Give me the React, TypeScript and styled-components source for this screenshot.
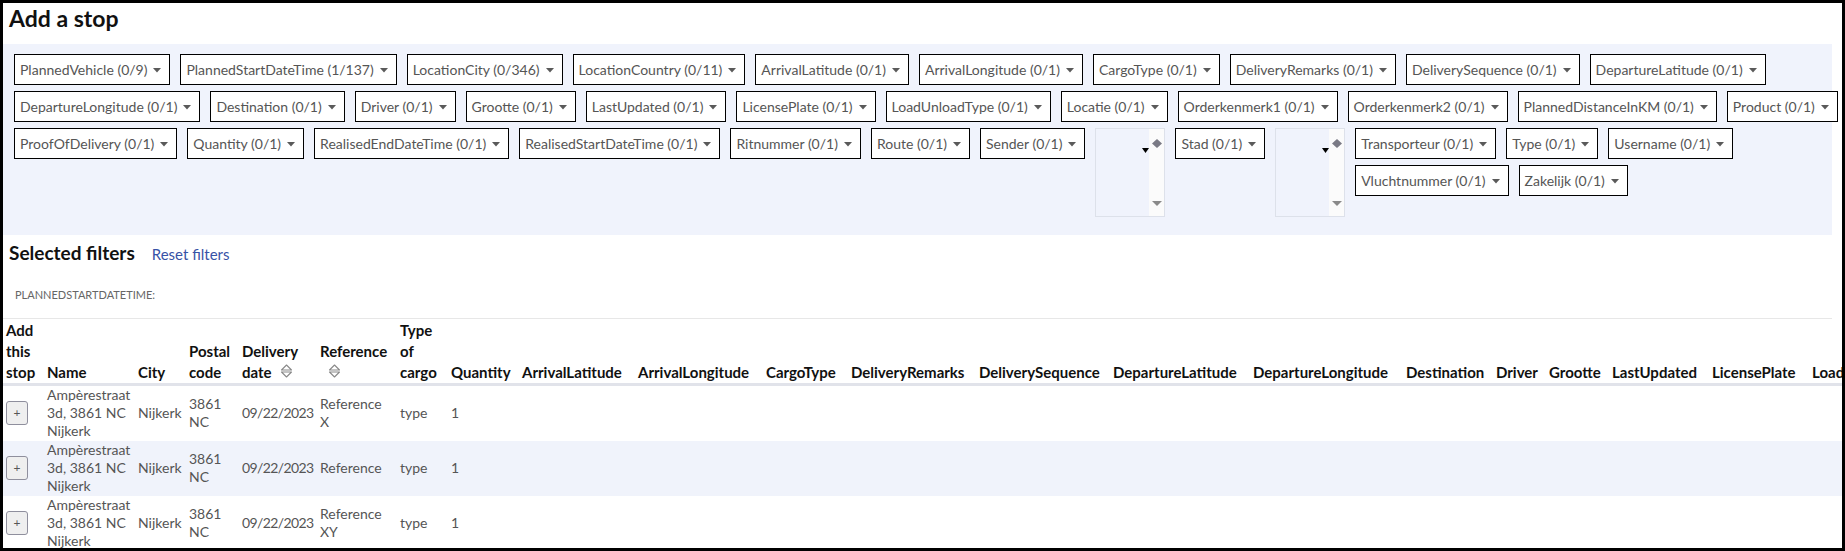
import React from "react";
import styled, { createGlobalStyle } from "styled-components";

const GlobalStyle = createGlobalStyle`
  html, body { margin: 0; padding: 0; background: #fff; }
  body { font-family: Lato, "Liberation Sans", sans-serif; }
  * { box-sizing: border-box; }
`;

const Frame = styled.div`
  width: 1845px;
  height: 551px;
  border: 3px solid #000;
  overflow: hidden;
  background: #fff;
`;

const Content = styled.div`
  padding-right: 10px;
`;

const Title = styled.h1`
  margin: 0;
  padding: 1px 6px 12px;
  font-size: 23px;
  line-height: 28px;
  font-weight: 700;
  color: #111;
`;

const FilterPanel = styled.div`
  background: #f0f3fc;
  padding: 10px 11px 18px;
  display: flex;
  flex-direction: column;
  gap: 6px;
`;

const ChipRow = styled.div`
  display: flex;
  gap: 10px;
  align-items: flex-start;
`;

const ChipColumn = styled.div`
  display: flex;
  flex-direction: column;
  gap: 6px;
`;

const Chip = styled.button`
  flex: none;
  height: 31px;
  display: inline-flex;
  align-items: center;
  gap: 6px;
  padding: 0 8px 0 5px;
  border: 1px solid #000;
  border-radius: 0;
  background: #fff;
  font-family: Lato, "Liberation Sans", sans-serif;
  font-size: 14px;
  color: #555;
  white-space: nowrap;
  cursor: pointer;
`;

const Caret = styled.svg`
  flex: none;
  display: block;
  margin-top: 1px;
`;

const ListBox = styled.div`
  flex: none;
  width: 70px;
  height: 89px;
  border: 1px solid #dde1ea;
  background: #f0f3fc;
  display: flex;
`;

const ListBody = styled.div`
  flex: 1;
  display: flex;
  justify-content: flex-end;
  align-items: flex-start;
  padding-top: 19px;
`;

const ScrollTrack = styled.div`
  width: 15px;
  background: #fbfbfb;
  display: flex;
  flex-direction: column;
  align-items: center;
  justify-content: space-between;
  padding: 10px 0 10px;
`;

const SelectedSection = styled.section`
  padding: 6px 0 16px;
  border-bottom: 1px solid #e7e7e7;
`;

const SelectedHeader = styled.div`
  display: flex;
  align-items: baseline;
  gap: 17px;
  padding-left: 6px;
`;

const SelectedTitle = styled.h2`
  margin: 0;
  font-size: 19px;
  line-height: 24px;
  font-weight: 700;
  color: #111;
`;

const ResetLink = styled.a`
  font-size: 15px;
  line-height: 24px;
  color: #3752a6;
  text-decoration: none;
  cursor: pointer;
`;

const FilterTag = styled.div`
  margin-top: 22px;
  padding-left: 12px;
  font-size: 11px;
  line-height: 14px;
  color: #666;
  text-transform: uppercase;
`;

const Table = styled.table<{ $w: number }>`
  width: ${(p) => p.$w}px;
  table-layout: fixed;
  border-collapse: separate;
  border-spacing: 0;
`;

const Col = styled.col<{ $w: number }>`
  width: ${(p) => p.$w}px;
`;

const Th = styled.th`
  padding: 1px 5px 0;
  text-align: left;
  vertical-align: bottom;
  font-size: 15px;
  line-height: 21px;
  font-weight: 700;
  color: #111;
  border-bottom: 3px solid #e1e3ea;
  white-space: normal;
  &:first-child { padding-left: 3px; }
`;

const Tr = styled.tr<{ $alt: boolean }>`
  background: ${(p) => (p.$alt ? "#f0f3fb" : "#fff")};
`;

const Td = styled.td<{ $tight?: boolean }>`
  padding: 0 5px 1px;
  vertical-align: middle;
  font-size: 14px;
  line-height: 18px;
  color: #555;
  letter-spacing: ${(p) => (p.$tight ? "-0.6px" : "normal")};
  &:first-child { padding-left: 3px; }
`;

const AddButton = styled.button`
  width: 22px;
  height: 24px;
  padding: 0;
  border: 1px solid #8f8f9d;
  border-radius: 3px;
  background: #efefef;
  color: #555;
  font-family: Lato, "Liberation Sans", sans-serif;
  font-size: 12px;
  line-height: 20px;
  display: block;
  cursor: pointer;
`;

const SortIcon = styled.svg`
  display: inline-block;
  margin-left: 8px;
`;

const CaretIcon = () => (
  <Caret width="8" height="5" viewBox="0 0 8 5">
    <polygon points="0,0 8,0 4,4.5" fill="#5a5a5a" />
  </Caret>
);

const Sort = () => (
  <SortIcon width="13" height="14" viewBox="0 0 13 14">
    <polygon points="1.5,6 6.5,1 11.5,6" fill="none" stroke="#8a8a8a" strokeWidth="1.1" strokeLinejoin="round" />
    <polygon points="1.5,8 11.5,8 6.5,13" fill="none" stroke="#8a8a8a" strokeWidth="1.1" strokeLinejoin="round" />
  </SortIcon>
);

const EmptyList = () => (
  <ListBox>
    <ListBody>
      <svg width="7" height="5" viewBox="0 0 7 5">
        <polygon points="0,0 7,0 3.5,5" fill="#000" />
      </svg>
    </ListBody>
    <ScrollTrack>
      <svg width="10" height="9" viewBox="0 0 10 9">
        <polygon points="5,0 10,4.5 5,9 0,4.5" fill="#7a7a85" />
      </svg>
      <svg width="10" height="5" viewBox="0 0 10 5">
        <polygon points="0,0 10,0 5,5" fill="#8a8a8a" />
      </svg>
    </ScrollTrack>
  </ListBox>
);

const FilterChip = ({ label }: { label: string }) => (
  <Chip type="button">
    {label}
    <CaretIcon />
  </Chip>
);

const row1 = [
  "PlannedVehicle (0/9)",
  "PlannedStartDateTime (1/137)",
  "LocationCity (0/346)",
  "LocationCountry (0/11)",
  "ArrivalLatitude (0/1)",
  "ArrivalLongitude (0/1)",
  "CargoType (0/1)",
  "DeliveryRemarks (0/1)",
  "DeliverySequence (0/1)",
  "DepartureLatitude (0/1)",
];
const row2 = [
  "DepartureLongitude (0/1)",
  "Destination (0/1)",
  "Driver (0/1)",
  "Grootte (0/1)",
  "LastUpdated (0/1)",
  "LicensePlate (0/1)",
  "LoadUnloadType (0/1)",
  "Locatie (0/1)",
  "Orderkenmerk1 (0/1)",
  "Orderkenmerk2 (0/1)",
  "PlannedDistanceInKM (0/1)",
  "Product (0/1)",
];
const row3 = [
  "ProofOfDelivery (0/1)",
  "Quantity (0/1)",
  "RealisedEndDateTime (0/1)",
  "RealisedStartDateTime (0/1)",
  "Ritnummer (0/1)",
  "Route (0/1)",
  "Sender (0/1)",
];
const tailTop = ["Transporteur (0/1)", "Type (0/1)", "Username (0/1)"];
const tailBottom = ["Vluchtnummer (0/1)", "Zakelijk (0/1)"];

type Column = { label: string; w: number; sort?: boolean };
const columns: Column[] = [
  { label: "Add this stop", w: 39 },
  { label: "Name", w: 91 },
  { label: "City", w: 51 },
  { label: "Postal code", w: 53 },
  { label: "Delivery date", w: 78, sort: true },
  { label: "Reference", w: 80, sort: true },
  { label: "Type of cargo", w: 51 },
  { label: "Quantity", w: 71 },
  { label: "ArrivalLatitude", w: 116 },
  { label: "ArrivalLongitude", w: 128 },
  { label: "CargoType", w: 85 },
  { label: "DeliveryRemarks", w: 128 },
  { label: "DeliverySequence", w: 134 },
  { label: "DepartureLatitude", w: 140 },
  { label: "DepartureLongitude", w: 153 },
  { label: "Destination", w: 90 },
  { label: "Driver", w: 53 },
  { label: "Grootte", w: 63 },
  { label: "LastUpdated", w: 100 },
  { label: "LicensePlate", w: 100 },
  { label: "LoadUnloadType", w: 135 },
  { label: "Locatie", w: 70 },
  { label: "Orderkenmerk1", w: 120 },
];

const stops = [
  { name: "Ampèrestraat 3d, 3861 NC Nijkerk", city: "Nijkerk", postal: "3861 NC", date: "09/22/2023", ref: "Reference X", type: "type", qty: "1" },
  { name: "Ampèrestraat 3d, 3861 NC Nijkerk", city: "Nijkerk", postal: "3861 NC", date: "09/22/2023", ref: "Reference", type: "type", qty: "1" },
  { name: "Ampèrestraat 3d, 3861 NC Nijkerk", city: "Nijkerk", postal: "3861 NC", date: "09/22/2023", ref: "Reference XY", type: "type", qty: "1" },
];

export default function App() {
  const tableWidth = columns.reduce((s, c) => s + c.w, 0);
  const extraCols = columns.length - 8;
  return (
    <>
      <GlobalStyle />
      <Frame>
        <Content>
          <Title>Add a stop</Title>
          <FilterPanel>
            <ChipRow>
              {row1.map((l) => (
                <FilterChip key={l} label={l} />
              ))}
            </ChipRow>
            <ChipRow>
              {row2.map((l) => (
                <FilterChip key={l} label={l} />
              ))}
            </ChipRow>
            <ChipRow>
              {row3.map((l) => (
                <FilterChip key={l} label={l} />
              ))}
              <EmptyList />
              <FilterChip label="Stad (0/1)" />
              <EmptyList />
              <ChipColumn>
                <ChipRow>
                  {tailTop.map((l) => (
                    <FilterChip key={l} label={l} />
                  ))}
                </ChipRow>
                <ChipRow>
                  {tailBottom.map((l) => (
                    <FilterChip key={l} label={l} />
                  ))}
                </ChipRow>
              </ChipColumn>
            </ChipRow>
          </FilterPanel>
          <SelectedSection>
            <SelectedHeader>
              <SelectedTitle>Selected filters</SelectedTitle>
              <ResetLink>Reset filters</ResetLink>
            </SelectedHeader>
            <FilterTag>PlannedStartDateTime:</FilterTag>
          </SelectedSection>
          <Table $w={tableWidth}>
            <colgroup>
              {columns.map((c) => (
                <Col key={c.label} $w={c.w} />
              ))}
            </colgroup>
            <thead>
              <tr>
                {columns.map((c) => (
                  <Th key={c.label}>
                    {c.label}
                    {c.sort && <Sort />}
                  </Th>
                ))}
              </tr>
            </thead>
            <tbody>
              {stops.map((s, i) => (
                <Tr key={i} $alt={i % 2 === 1}>
                  <Td>
                    <AddButton type="button">+</AddButton>
                  </Td>
                  <Td>{s.name}</Td>
                  <Td>{s.city}</Td>
                  <Td>{s.postal}</Td>
                  <Td $tight>{s.date}</Td>
                  <Td>{s.ref}</Td>
                  <Td>{s.type}</Td>
                  <Td>{s.qty}</Td>
                  {Array.from({ length: extraCols }).map((_, j) => (
                    <Td key={j} />
                  ))}
                </Tr>
              ))}
            </tbody>
          </Table>
        </Content>
      </Frame>
    </>
  );
}
